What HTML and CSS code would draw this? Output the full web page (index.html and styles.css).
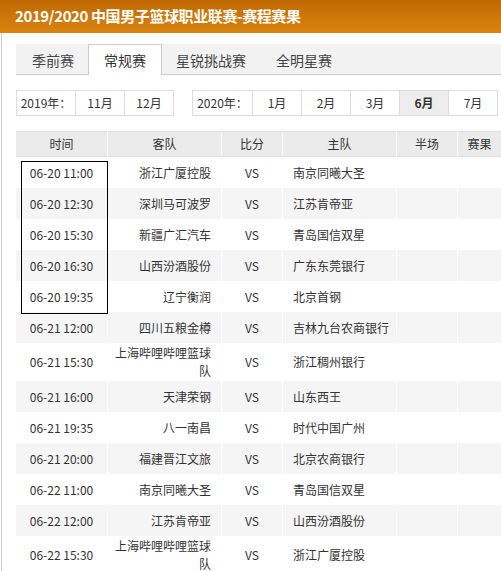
FILE: index.html
```html
<!DOCTYPE html>
<html lang="zh-CN">
<head>
<meta charset="utf-8">
<title>赛程赛果</title>
<link rel="stylesheet" href="styles.css">
</head>
<body>
<div class="title-bar">2019/2020 中国男子篮球职业联赛-赛程赛果</div>
<div class="panel">
  <div class="tabs">
    <div class="tab">季前赛</div>
    <div class="tab active">常规赛</div>
    <div class="tab">星锐挑战赛</div>
    <div class="tab">全明星赛</div>
  </div>
  <div class="months">
    <div class="group">
      <div class="cell label">2019年：</div>
      <div class="cell">11月</div>
      <div class="cell">12月</div>
    </div>
    <div class="group">
      <div class="cell label wide">2020年：</div>
      <div class="cell">1月</div>
      <div class="cell">2月</div>
      <div class="cell">3月</div>
      <div class="cell current">6月</div>
      <div class="cell">7月</div>
    </div>
  </div>
  <div class="table-wrap">
    <table class="schedule">
      <thead>
        <tr>
          <th class="c-time">时间</th>
          <th class="c-away">客队</th>
          <th class="c-score">比分</th>
          <th class="c-home">主队</th>
          <th class="c-half">半场</th>
          <th class="c-result">赛果</th>
        </tr>
      </thead>
      <tbody>
        <tr><td class="t">06-20 11:00</td><td class="away">浙江广厦控股</td><td class="vs">VS</td><td class="home">南京同曦大圣</td><td></td><td></td></tr>
        <tr><td class="t">06-20 12:30</td><td class="away">深圳马可波罗</td><td class="vs">VS</td><td class="home">江苏肯帝亚</td><td></td><td></td></tr>
        <tr><td class="t">06-20 15:30</td><td class="away">新疆广汇汽车</td><td class="vs">VS</td><td class="home">青岛国信双星</td><td></td><td></td></tr>
        <tr><td class="t">06-20 16:30</td><td class="away">山西汾酒股份</td><td class="vs">VS</td><td class="home">广东东莞银行</td><td></td><td></td></tr>
        <tr><td class="t">06-20 19:35</td><td class="away">辽宁衡润</td><td class="vs">VS</td><td class="home">北京首钢</td><td></td><td></td></tr>
        <tr><td class="t">06-21 12:00</td><td class="away">四川五粮金樽</td><td class="vs">VS</td><td class="home">吉林九台农商银行</td><td></td><td></td></tr>
        <tr><td class="t">06-21 15:30</td><td class="away">上海哔哩哔哩篮球队</td><td class="vs">VS</td><td class="home">浙江稠州银行</td><td></td><td></td></tr>
        <tr><td class="t">06-21 16:00</td><td class="away">天津荣钢</td><td class="vs">VS</td><td class="home">山东西王</td><td></td><td></td></tr>
        <tr><td class="t">06-21 19:35</td><td class="away">八一南昌</td><td class="vs">VS</td><td class="home">时代中国广州</td><td></td><td></td></tr>
        <tr><td class="t">06-21 20:00</td><td class="away">福建晋江文旅</td><td class="vs">VS</td><td class="home">北京农商银行</td><td></td><td></td></tr>
        <tr><td class="t">06-22 11:00</td><td class="away">南京同曦大圣</td><td class="vs">VS</td><td class="home">青岛国信双星</td><td></td><td></td></tr>
        <tr><td class="t">06-22 12:00</td><td class="away">江苏肯帝亚</td><td class="vs">VS</td><td class="home">山西汾酒股份</td><td></td><td></td></tr>
        <tr><td class="t">06-22 15:30</td><td class="away">上海哔哩哔哩篮球队</td><td class="vs">VS</td><td class="home">浙江广厦控股</td><td></td><td></td></tr>
      </tbody>
    </table>
    <div class="mark"></div>
  </div>
</div>
</body>
</html>
```
FILE: styles.css
```css
* { box-sizing: border-box; }
html, body { margin: 0; padding: 0; background: #fff; }
body {
  font-family: "Noto Sans CJK SC", "Noto Sans", sans-serif;
  color: #333;
  font-size: 12px;
  width: 501px;
  overflow: hidden;
}
.title-bar {
  height: 33px;
  line-height: 32px;
  padding-left: 15px;
  background: linear-gradient(#bf6900, #d98510);
  color: #fff;
  font-weight: bold;
  font-size: 15px;
  letter-spacing: -0.4px;
  white-space: nowrap;
}
.panel {
  margin-left: 1px;
  border-left: 1px solid #ccc;
  padding: 11px 0 0 14px;
}
.tabs {
  display: flex;
  height: 31px;
  background: #f2f2f2;
  border-bottom: 1px solid #ccc;
}
.tab {
  padding: 0 15px;
  height: 30px;
  line-height: 30px;
  font-size: 14px;
  color: #444;
  border: 1px solid transparent;
  border-bottom: none;
  margin: 0 -1px;
}
.tab:first-child { margin-left: 0; }
.tab.active {
  background: #fff;
  border-color: #ccc;
  height: 31px;
  color: #333;
  position: relative;
  z-index: 1;
}
.months {
  display: flex;
  gap: 18px;
  margin-top: 15px;
  height: 26px;
}
.group {
  display: flex;
  border: 1px solid #ddd;
  border-right: none;
}
.cell {
  width: 49px;
  height: 24px;
  line-height: 24px;
  text-align: center;
  border-right: 1px solid #ddd;
  color: #333;
}
.cell.label { width: 59px; }
.cell.label.wide { width: 60px; }
.cell.current { background: #ededed; font-weight: bold; }
.table-wrap {
  position: relative;
  margin-top: 15px;
  width: 485px;
}
.schedule {
  width: 485px;
  table-layout: fixed;
  border-collapse: separate;
  border-spacing: 0;
}
.schedule th {
  height: 26px;
  padding: 0;
  background: #ebebeb;
  border-top: 1px solid #ddd;
  border-bottom: 1px solid #ddd;
  font-weight: normal;
  text-align: center;
  line-height: 22px;
}
.schedule th + th, .schedule td + td { border-left: 1px solid #fff; }
.c-time { width: 91px; }
.c-away { width: 114px; }
.c-score { width: 61px; }
.c-home { width: 114px; }
.c-half { width: 61px; }
.c-result { width: 44px; }
.schedule tbody tr { height: 31px; }
.schedule tbody tr:nth-child(even) td { background: #f5f5f5; }
.schedule td {
  padding: 1px 6px;
  line-height: 18px;
  vertical-align: middle;
}
.schedule td.t { text-align: center; padding: 1px 0; }
.schedule td.away { text-align: right; padding-right: 10px; }
.schedule td.vs { text-align: center; }
.schedule td.home { text-align: left; padding-left: 10px; }
.mark {
  position: absolute;
  left: 5px;
  top: 30px;
  width: 87px;
  height: 153px;
  border: 1px solid #000;
  pointer-events: none;
}
```
